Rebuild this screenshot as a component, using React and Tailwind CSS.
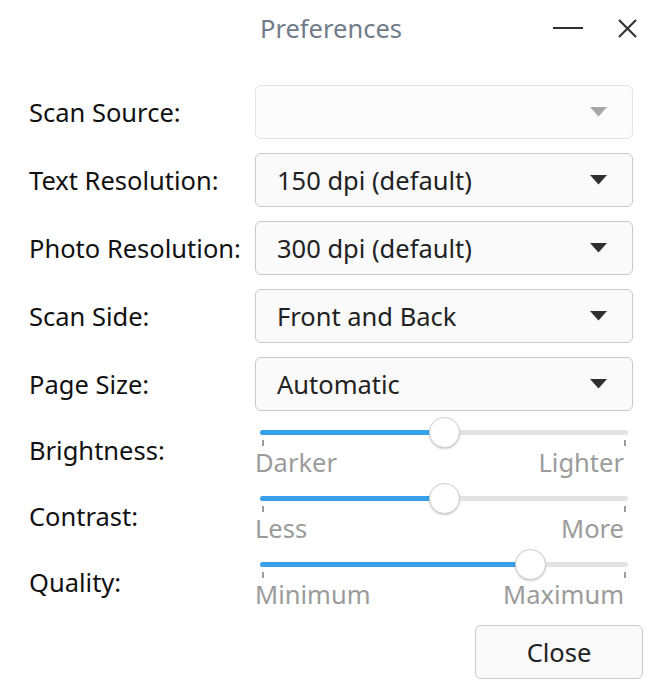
import { useState } from "react"

const combos = [
    { label: "Scan Source:", value: "", disabled: true },
    { label: "Text Resolution:", value: "150 dpi (default)" },
    { label: "Photo Resolution:", value: "300 dpi (default)" },
    { label: "Scan Side:", value: "Front and Back" },
    { label: "Page Size:", value: "Automatic" },
]

const sliders = [
    { label: "Brightness:", min: "Darker", max: "Lighter", value: 0.5 },
    { label: "Contrast:", min: "Less", max: "More", value: 0.5 },
    { label: "Quality:", min: "Minimum", max: "Maximum", value: 0.755 },
]

function Arrow({ disabled }) {
    return (
        <svg width="17" height="10" viewBox="0 0 17 10">
            <path d="M0 0 L17 0 L8.5 9.5 Z" fill={disabled ? "#a6a6aa" : "#2e2e2e"} />
        </svg>
    )
}

function Combo({ value, disabled }) {
    return (
        <div className={`h-[54px] flex items-center justify-between pl-[21px] pr-[25px] rounded-[6px] border ${disabled ? "border-[#e3e3e6] bg-[#fcfcfc]" : "border-[#c9c9c9] bg-[#fafafa]"}`}>
            <span className="text-[#222]">{value}</span>
            <Arrow disabled={disabled} />
        </div>
    )
}

function Slider({ min, max, value }) {
    // track is 368px wide, knob 30px, knob centre travels from 15 to 353
    const center = 15 + value * 338
    return (
        <div className="h-[66px] px-[5px]">
            <div className="relative h-[32px]">
                <div className="absolute left-0 right-0 top-[14px] h-[5px] rounded-full bg-[#e3e3e3]" />
                <div className="absolute left-0 top-[14px] h-[5px] rounded-full bg-[#36a1e8]" style={{ width: center }} />
                <div className="absolute left-[2px] top-[24px] w-[2px] h-[6px] bg-[#9c9c9c]" />
                <div className="absolute right-[2px] top-[24px] w-[2px] h-[6px] bg-[#9c9c9c]" />
                <div className="absolute top-[1px] w-[31px] h-[31px] rounded-full bg-white border border-[#cfcfcf] shadow-[0_1px_2px_rgba(0,0,0,0.2)]" style={{ left: center - 15.5 }} />
            </div>
            <div className="flex justify-between -mx-[5px] -mt-[1px] h-[30px] leading-[30px] text-[#9b9b9b]">
                <span>{min}</span>
                <span className="pr-[9px]">{max}</span>
            </div>
        </div>
    )
}

export default function App() {
    const [open] = useState(true)
    return (
        <div className="w-[662px] h-[698px] bg-white overflow-hidden text-[25.5px] text-[#111]" style={{ fontFamily: '"Noto Sans", "Open Sans", sans-serif' }}>
            <div className="relative h-[56px] flex items-center justify-center">
                <span className="text-[#717b8a]">Preferences</span>
                <div className="absolute right-[25px] top-0 h-[56px] flex items-center gap-[35px]">
                    <div className="w-[30px] h-[2px] bg-[#2f2f2f]" />
                    <svg width="19" height="19" viewBox="0 0 19 19">
                        <path d="M1 1 L18 18 M18 1 L1 18" stroke="#2f2f2f" strokeWidth="2" />
                    </svg>
                </div>
            </div>

            {open && (
                <div className="px-[29px] pt-[29px]">
                    <div className="flex flex-col gap-[14px]">
                        {combos.map(c => (
                            <div key={c.label} className="grid grid-cols-[226px_1fr] items-center">
                                <span>{c.label}</span>
                                <Combo value={c.value} disabled={c.disabled} />
                            </div>
                        ))}
                    </div>
                    <div className="flex flex-col mt-[5px]">
                        {sliders.map(s => (
                            <div key={s.label} className="grid grid-cols-[226px_1fr]">
                                <span className="pt-[15px]">{s.label}</span>
                                <Slider min={s.min} max={s.max} value={s.value} />
                            </div>
                        ))}
                    </div>
                    <div className="flex justify-end mt-[11px]">
                        <button className="w-[168px] h-[54px] -mr-[10px] rounded-[6px] border border-[#c9c9c9] bg-[#fafafa] text-[#222]">Close</button>
                    </div>
                </div>
            )}
        </div>
    )
}
